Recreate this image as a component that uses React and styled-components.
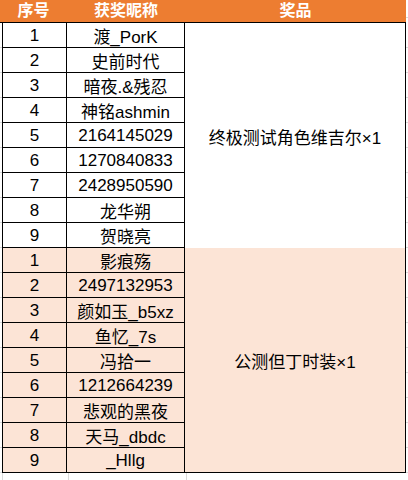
import React from 'react';
import styled, { createGlobalStyle } from 'styled-components';

const GlobalStyle = createGlobalStyle`
  html, body {
    margin: 0;
    padding: 0;
    background: #fff;
  }
  body {
    font-family: "Liberation Sans", "Noto Sans CJK SC", sans-serif;
  }
`

const Sheet = styled.div`
  width: 408px;
  height: 480px;
  overflow: hidden;
  background-image: repeating-linear-gradient(to bottom, transparent 0 24px, #d9d9d9 24px 25px);
  background-position: 0 23px;
  background-color: #fff;
`

const Header = styled.div`
  display: grid;
  grid-template-columns: 67px 118px 221px;
  width: 406px;
  height: 22px;
  background: #ed7d31;
  border-bottom: 1px solid #000;
  box-sizing: content-box;
`

const HeadCell = styled.div`
  display: flex;
  align-items: center;
  justify-content: center;
  color: #fff;
  font-weight: bold;
  font-size: 16px;
  line-height: 22px;
`

const Body = styled.div`
  display: grid;
  grid-template-columns: 64px 118px 221px;
  grid-auto-rows: 25px;
  width: 403px;
  margin-left: 2px;
  border-left: 1px solid #000;
`

const Cell = styled.div`
  display: flex;
  align-items: center;
  justify-content: center;
  box-sizing: border-box;
  border-right: 1px solid #000;
  border-bottom: 1px solid #000;
  background: ${({ $pink }) => ($pink ? '#fce4d6' : '#fff')};
  color: #000;
  font-size: 17px;
  white-space: nowrap;
  padding-top: 1px;
`

const Prize = styled(Cell)`
  grid-column: 3;
  grid-row: span 9;
  border-bottom: ${({ $last }) => ($last ? '1px solid #000' : 'none')};
  font-size: 17px;
`

const Footer = styled.div`
  display: grid;
  grid-template-columns: 66px 118px 222px;
  height: 8px;
  width: 406px;
  margin-left: 2px;
  border-left: 1px solid #d9d9d9;
  background: #fff;
`

const FootCell = styled.div`
  border-right: 1px solid #d9d9d9;
`

const groups = [
  {
    prize: '终极测试角色维吉尔×1',
    names: ['渡_PorK', '史前时代', '暗夜.&残忍', '神铭ashmin', '2164145029', '1270840833', '2428950590', '龙华朔', '贺晓亮'],
  },
  {
    prize: '公测但丁时装×1',
    names: ['影痕殇', '2497132953', '颜如玉_b5xz', '鱼忆_7s', '冯拾一', '1212664239', '悲观的黑夜', '天马_dbdc', '_Hllg'],
  },
]

const App = () => {
  return (
    <Sheet>
      <GlobalStyle />
      <Header>
        <HeadCell>序号</HeadCell>
        <HeadCell>获奖昵称</HeadCell>
        <HeadCell>奖品</HeadCell>
      </Header>
      <Body>
        {groups.map((g, gi) =>
          g.names.map((name, i) => (
            <React.Fragment key={gi + '-' + i}>
              <Cell $pink={gi === 1} style={{ gridColumn: 1 }}>{i + 1}</Cell>
              <Cell $pink={gi === 1} style={{ gridColumn: 2 }}>{name}</Cell>
              {i === 0 && (
                <Prize $pink={gi === 1} $last={gi === 1}>{g.prize}</Prize>
              )}
            </React.Fragment>
          ))
        )}
      </Body>
      <Footer>
        <FootCell />
        <FootCell />
        <FootCell />
      </Footer>
    </Sheet>
  )
}

export default App
